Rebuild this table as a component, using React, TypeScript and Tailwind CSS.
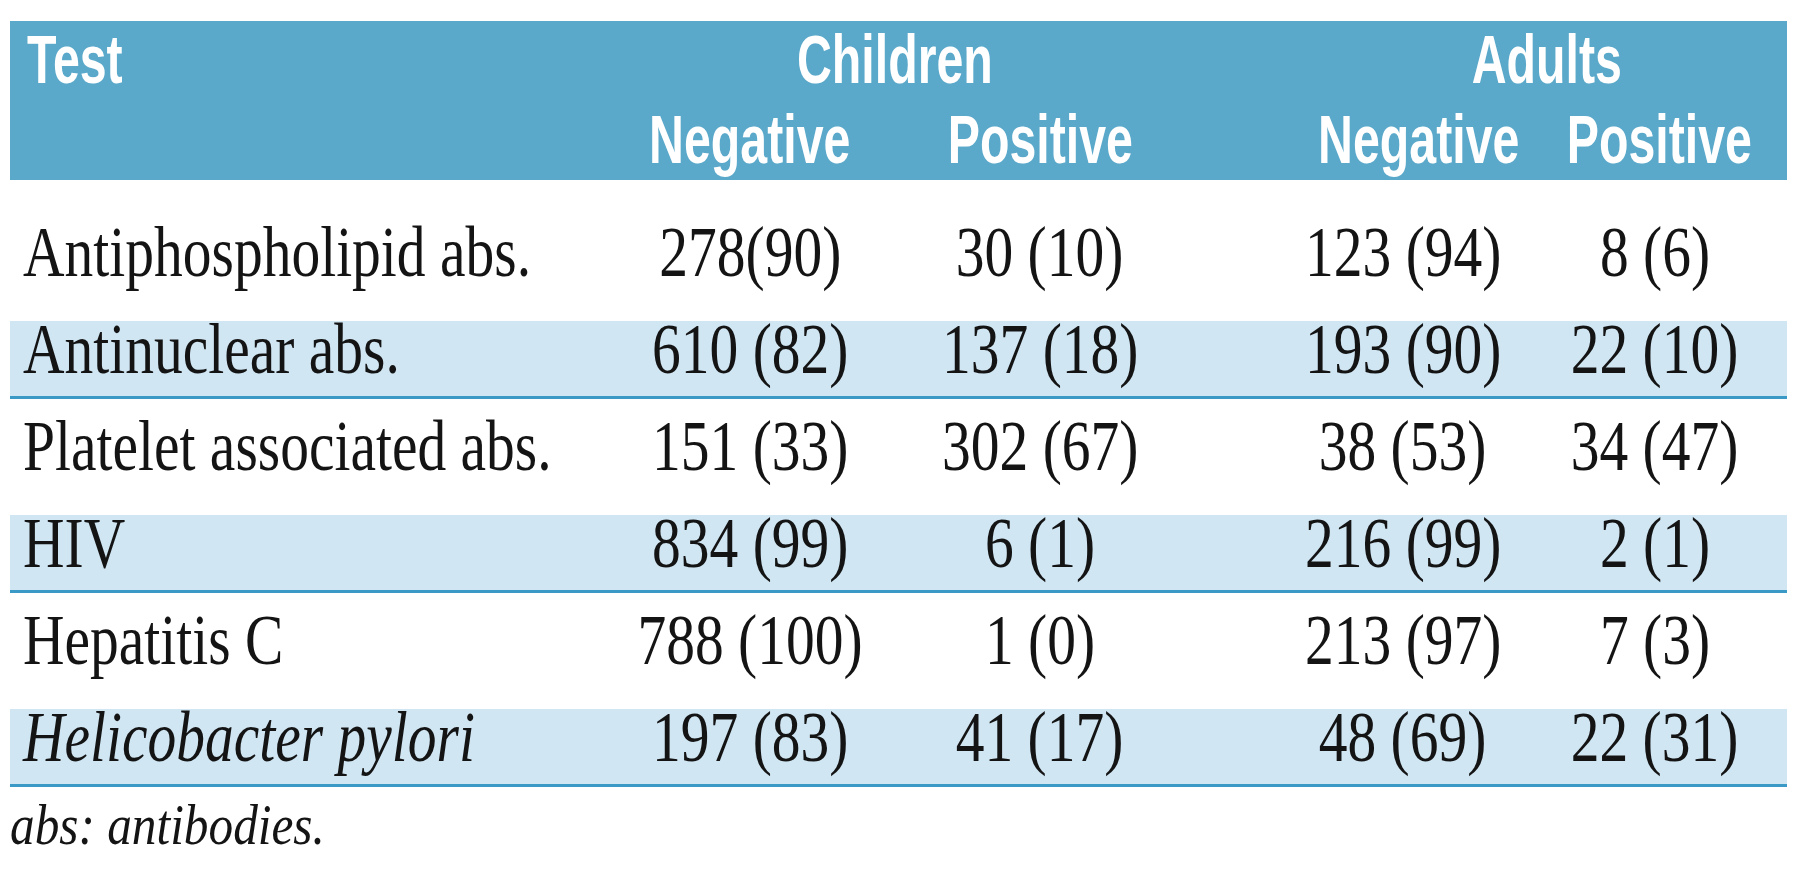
import React from "react";

type Row = { label: string; italic?: boolean; v: [string, string, string, string] };

const rows: Row[] = [
  { label: "Antiphospholipid abs.", v: ["278(90)", "30 (10)", "123 (94)", "8 (6)"] },
  { label: "Antinuclear abs.", v: ["610 (82)", "137 (18)", "193 (90)", "22 (10)"] },
  { label: "Platelet associated abs.", v: ["151 (33)", "302 (67)", "38 (53)", "34 (47)"] },
  { label: "HIV", v: ["834 (99)", "6 (1)", "216 (99)", "2 (1)"] },
  { label: "Hepatitis C", v: ["788 (100)", "1 (0)", "213 (97)", "7 (3)"] },
  { label: "Helicobacter pylori", italic: true, v: ["197 (83)", "41 (17)", "48 (69)", "22 (31)"] },
];

function H({ children, left }: { children: React.ReactNode; left?: boolean }) {
  return (
    <span
      className={
        left
          ? "inline-block whitespace-nowrap scale-x-[0.71] origin-left"
          : "inline-block whitespace-nowrap scale-x-[0.71]"
      }
    >
      {children}
    </span>
  );
}

function B({ children, left, italic }: { children: React.ReactNode; left?: boolean; italic?: boolean }) {
  return (
    <span
      className={
        (left
          ? "inline-block whitespace-nowrap scale-x-[0.81] origin-left"
          : "inline-block whitespace-nowrap scale-x-[0.81]") + (italic ? " italic" : "")
      }
    >
      {children}
    </span>
  );
}

export default function App() {
  return (
    <div className="w-[1800px] h-[885px] bg-white overflow-hidden">
      <div className="pl-[10px] pt-[21px] w-[1787px]">
        {/* Header */}
        <div className="grid grid-cols-[595px_290px_290px_92px_252px_252px] h-[159px] bg-[#5aa8ca] text-white font-['Liberation_Sans',Arial,sans-serif] font-bold text-[68px] leading-[76px]">
          <div className="pl-[17px]">
            <H left>Test</H>
          </div>
          <div className="col-span-2 text-center">
            <H>Children</H>
          </div>
          <div />
          <div className="col-span-2 text-center pl-[36px]">
            <H>Adults</H>
          </div>
          <div />
          <div className="text-center">
            <H>Negative</H>
          </div>
          <div className="text-center">
            <H>Positive</H>
          </div>
          <div />
          <div className="text-center">
            <H>Negative</H>
          </div>
          <div className="text-center">
            <H>Positive</H>
          </div>
        </div>

        {/* Body */}
        {rows.map((r, i) => (
          <div
            key={r.label}
            className={
              "grid grid-cols-[595px_290px_290px_92px_252px_252px] h-[78px] font-['Liberation_Serif','Times_New_Roman',serif] text-[71px] leading-[56px] text-[#141414] " +
              (i === 0 ? "mt-[44px] " : "mt-[19px] ") +
              (i % 2 === 1 ? "bg-[#d0e6f3] border-b-[3px] border-[#3a9ac5]" : "")
            }
          >
            <div className="pl-[13px]">
              <B left italic={r.italic}>
                {r.label}
              </B>
            </div>
            <div className="text-center">
              <B>{r.v[0]}</B>
            </div>
            <div className="text-center">
              <B>{r.v[1]}</B>
            </div>
            <div />
            <div className="text-center">
              <B>{r.v[2]}</B>
            </div>
            <div className="text-center">
              <B>{r.v[3]}</B>
            </div>
          </div>
        ))}

        {/* Footnote */}
        <div className="mt-[10px] font-['Liberation_Serif','Times_New_Roman',serif] italic text-[56px] leading-[56px] text-[#141414]">
          <span className="inline-block whitespace-nowrap scale-x-[0.88] origin-left">abs: antibodies.</span>
        </div>
      </div>
    </div>
  );
}
